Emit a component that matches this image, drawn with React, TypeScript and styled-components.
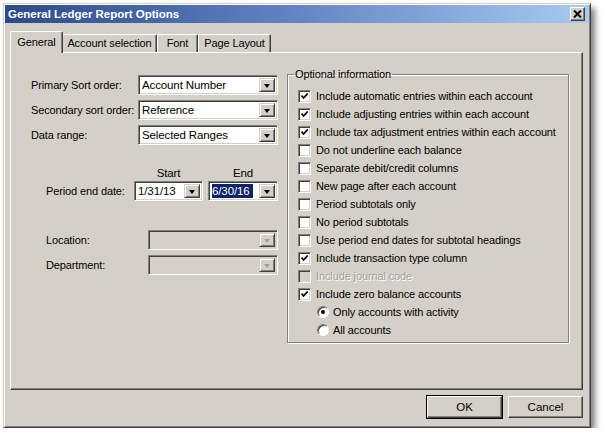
import React from "react";
import styled, { createGlobalStyle, css } from "styled-components";

const GlobalStyle = createGlobalStyle`
  html, body {
    margin: 0;
    padding: 0;
    background: #ffffff;
  }
  body {
    font-family: "Liberation Sans", Arial, sans-serif;
    font-size: 11px;
    letter-spacing: -0.12px;
    color: #000;
  }
`;

const face = "#d4d0c8";

const Window = styled.div`
  box-sizing: border-box;
  margin: 3px 0 0 3px;
  width: 588px;
  height: 425px;
  padding: 1px;
  background: ${face};
  border-top: 1px solid ${face};
  border-left: 1px solid ${face};
  border-right: 1px solid #404040;
  border-bottom: 1px solid #404040;
  box-shadow: inset 1px 1px #ffffff, inset -1px -1px #808080, 4px 5px 6px rgba(0, 0, 0, 0.5);
  display: flex;
  flex-direction: column;
`;

const TitleBar = styled.div`
  height: 18px;
  display: flex;
  align-items: center;
  justify-content: space-between;
  padding: 0 4px 0 3px;
  background: linear-gradient(to right, #2c4a8a 0%, #5b7fbf 45%, #a8cbf1 100%);
`;

const Title = styled.span`
  color: #fff;
  font-weight: bold;
  font-size: 11.5px;
  letter-spacing: 0;
`;

const CloseButton = styled.div`
  box-sizing: border-box;
  width: 15px;
  height: 14px;
  background: ${face};
  border-top: 1px solid #fff;
  border-left: 1px solid #fff;
  border-right: 1px solid #404040;
  border-bottom: 1px solid #404040;
  box-shadow: inset -1px -1px #808080;
  display: flex;
  align-items: center;
  justify-content: center;
`;

const Body = styled.div`
  flex: 1;
  padding: 8px 6px 0 5px;
  display: flex;
  flex-direction: column;
`;

const TabStrip = styled.div`
  display: flex;
  align-items: flex-end;
  height: 21px;
  padding-left: 1px;
  position: relative;
  z-index: 1;
`;

const Tab = styled.div<{ $active?: boolean; $width: number }>`
  box-sizing: border-box;
  width: ${(p) => p.$width}px;
  height: ${(p) => (p.$active ? "22px" : "18px")};
  padding-top: ${(p) => (p.$active ? "4px" : "2px")};
  margin: ${(p) => (p.$active ? "0 -1px -1px -1px" : "0")};
  text-align: center;
  background: ${face};
  border-top: 1px solid #fff;
  border-left: 1px solid #fff;
  border-right: 1px solid #404040;
  box-shadow: inset -1px 0 #808080;
  border-radius: 2px 2px 0 0;
  white-space: nowrap;
  ${(p) =>
    p.$active &&
    css`
      position: relative;
      z-index: 2;
    `}
`;

const Panel = styled.div`
  box-sizing: border-box;
  height: 338px;
  border-top: 1px solid #fff;
  border-left: 1px solid #fff;
  border-right: 1px solid #404040;
  border-bottom: 1px solid #404040;
  box-shadow: inset -1px -1px #808080;
  padding: 22px 0 0 20px;
  display: flex;
  gap: 8px;
`;

const LeftColumn = styled.div`
  display: flex;
  flex-direction: column;
  width: 248px;
`;

const FieldRow = styled.div<{ $indent?: number; $labelWidth: number }>`
  display: flex;
  align-items: center;
  height: 20px;
  margin-bottom: 5px;
  padding-left: ${(p) => p.$indent ?? 0}px;
  & > label {
    width: ${(p) => p.$labelWidth}px;
    flex: none;
  }
`;

const Label = styled.label`
  white-space: nowrap;
`;

const ComboBox = styled.div<{ $width: number; $disabled?: boolean }>`
  box-sizing: border-box;
  width: ${(p) => p.$width}px;
  height: 20px;
  display: flex;
  align-items: stretch;
  background: ${(p) => (p.$disabled ? face : "#fff")};
  border-top: 1px solid #808080;
  border-left: 1px solid #808080;
  border-right: 1px solid #fff;
  border-bottom: 1px solid #fff;
  box-shadow: inset 1px 1px #404040, inset -1px -1px ${face};
  padding: 2px;
`;

const ComboText = styled.div<{ $selected?: boolean }>`
  flex: 1;
  font-size: 11.5px;
  line-height: 14px;
  padding-left: 1px;
  white-space: nowrap;
  overflow: hidden;
  ${(p) =>
    p.$selected &&
    css`
      span {
        display: inline-block;
        padding-right: 3px;
        background: #0a246a;
        color: #fff;
      }
    `}
`;

const DropButton = styled.div<{ $disabled?: boolean }>`
  box-sizing: border-box;
  width: 16px;
  flex: none;
  background: ${face};
  border-top: 1px solid ${face};
  border-left: 1px solid ${face};
  border-right: 1px solid #404040;
  border-bottom: 1px solid #404040;
  box-shadow: inset 1px 1px #fff, inset -1px -1px #808080;
  display: flex;
  align-items: center;
  justify-content: center;
  &::after {
    content: "";
    border-left: 3.5px solid transparent;
    border-right: 3.5px solid transparent;
    border-top: 4px solid ${(p) => (p.$disabled ? "#a0a0a0" : "#000")};
    margin-top: 1px;
  }
`;

const DateBlock = styled.div`
  display: grid;
  grid-template-columns: 83px 69px 70px;
  column-gap: 5px;
  row-gap: 1px;
  margin: 16px 0 0 15px;
`;

const ColumnHead = styled.div`
  font-size: 11.5px;
  text-align: center;
  height: 14px;
  line-height: 14px;
`;

const DateLabel = styled(Label)`
  align-self: center;
`;

const Spacer = styled.div<{ $h: number }>`
  height: ${(p) => p.$h}px;
`;

const GroupBox = styled.fieldset`
  box-sizing: border-box;
  min-width: 0;
  margin: -7px 0 0 0;
  width: 282px;
  height: 275px;
  padding: 7px 0 0 10px;
  border: 1px solid #808080;
  box-shadow: inset 1px 1px #fff, 1px 1px #fff;
  display: flex;
  flex-direction: column;
`;

const Legend = styled.legend`
  padding: 0 1px;
  margin-left: -4px;
`;

const OptionRow = styled.div<{ $indent?: number; $disabled?: boolean }>`
  display: flex;
  align-items: center;
  height: 18px;
  padding-left: ${(p) => p.$indent ?? 0}px;
  white-space: nowrap;
  color: ${(p) => (p.$disabled ? "#a0a0a0" : "#000")};
  text-shadow: ${(p) => (p.$disabled ? "1px 1px #fff" : "none")};
`;

const CheckBox = styled.span<{ $disabled?: boolean }>`
  box-sizing: border-box;
  width: 13px;
  height: 13px;
  flex: none;
  margin-right: 5px;
  background: ${(p) => (p.$disabled ? face : "#fff")};
  border-top: 1px solid #808080;
  border-left: 1px solid #808080;
  border-right: 1px solid #fff;
  border-bottom: 1px solid #fff;
  box-shadow: inset 1px 1px #404040, inset -1px -1px ${face};
  display: flex;
  align-items: center;
  justify-content: center;
`;

const Radio = styled.span<{ $on?: boolean }>`
  box-sizing: border-box;
  width: 12px;
  height: 12px;
  flex: none;
  margin-right: 4px;
  border-radius: 50%;
  background: #fff;
  border: 1px solid;
  border-color: #808080 #fff #fff #808080;
  box-shadow: inset 1px 1px #404040;
  display: flex;
  align-items: center;
  justify-content: center;
  &::after {
    content: "";
    width: 4px;
    height: 4px;
    border-radius: 50%;
    background: ${(p) => (p.$on ? "#000" : "transparent")};
  }
`;

const Footer = styled.div`
  display: flex;
  justify-content: flex-end;
  gap: 6px;
  padding-top: 6px;
`;

const Button = styled.button<{ $default?: boolean }>`
  box-sizing: border-box;
  width: 75px;
  height: 22px;
  font-family: inherit;
  font-size: 11.5px;
  color: #000;
  background: ${face};
  padding: 0;
  border-top: 1px solid #fff;
  border-left: 1px solid #fff;
  border-right: 1px solid #404040;
  border-bottom: 1px solid #404040;
  box-shadow: inset -1px -1px #808080;
  ${(p) =>
    p.$default &&
    css`
      outline: 1px solid #000;
      outline-offset: 0;
    `}
`;

const Check = () => (
  <svg width="7" height="7" viewBox="0 0 7 7">
    <path d="M0.5 2.5 L2.5 5 L6.8 0.5" stroke="#000" strokeWidth="1.8" fill="none" />
  </svg>
);

type Option = { label: string; checked?: boolean; disabled?: boolean };

const options: Option[] = [
  { label: "Include automatic entries within each account", checked: true },
  { label: "Include adjusting entries within each account", checked: true },
  { label: "Include tax adjustment entries within each account", checked: true },
  { label: "Do not underline each balance" },
  { label: "Separate debit/credit columns" },
  { label: "New page after each account" },
  { label: "Period subtotals only" },
  { label: "No period subtotals" },
  { label: "Use period end dates for subtotal headings" },
  { label: "Include transaction type column", checked: true },
  { label: "Include journal code", disabled: true },
  { label: "Include zero balance accounts", checked: true },
];

const Combo = ({
  width,
  value,
  disabled,
  selected,
}: {
  width: number;
  value?: string;
  disabled?: boolean;
  selected?: boolean;
}) => (
  <ComboBox $width={width} $disabled={disabled}>
    <ComboText $selected={selected}>{value && <span>{value}</span>}</ComboText>
    <DropButton $disabled={disabled} />
  </ComboBox>
);

export default function App() {
  return (
    <>
      <GlobalStyle />
      <Window>
        <TitleBar>
          <Title>General Ledger Report Options</Title>
          <CloseButton>
            <svg width="9" height="8" viewBox="0 0 9 8">
              <path d="M1 0.5 L8 7.5 M8 0.5 L1 7.5" stroke="#000" strokeWidth="2" />
            </svg>
          </CloseButton>
        </TitleBar>
        <Body>
          <TabStrip>
            <Tab $active $width={53}>General</Tab>
            <Tab $width={95}>Account selection</Tab>
            <Tab $width={41}>Font</Tab>
            <Tab $width={73}>Page Layout</Tab>
          </TabStrip>
          <Panel>
            <LeftColumn>
              <FieldRow $labelWidth={107}>
                <Label>Primary Sort order:</Label>
                <Combo width={140} value="Account Number" />
              </FieldRow>
              <FieldRow $labelWidth={107}>
                <Label>Secondary sort order:</Label>
                <Combo width={140} value="Reference" />
              </FieldRow>
              <FieldRow $labelWidth={107}>
                <Label>Data range:</Label>
                <Combo width={140} value="Selected Ranges" />
              </FieldRow>
              <DateBlock>
                <span />
                <ColumnHead>Start</ColumnHead>
                <ColumnHead>End</ColumnHead>
                <DateLabel>Period end date:</DateLabel>
                <Combo width={69} value="1/31/13" />
                <Combo width={70} value="6/30/16" selected />
              </DateBlock>
              <Spacer $h={29} />
              <FieldRow $indent={15} $labelWidth={102}>
                <Label>Location:</Label>
                <Combo width={130} disabled />
              </FieldRow>
              <FieldRow $indent={15} $labelWidth={102}>
                <Label>Department:</Label>
                <Combo width={130} disabled />
              </FieldRow>
            </LeftColumn>
            <GroupBox>
              <Legend>Optional information</Legend>
              {options.map((o) => (
                <OptionRow key={o.label} $disabled={o.disabled}>
                  <CheckBox $disabled={o.disabled}>{o.checked && <Check />}</CheckBox>
                  {o.label}
                </OptionRow>
              ))}
              <OptionRow $indent={19}>
                <Radio $on />
                Only accounts with activity
              </OptionRow>
              <OptionRow $indent={19}>
                <Radio />
                All accounts
              </OptionRow>
            </GroupBox>
          </Panel>
          <Footer>
            <Button $default>OK</Button>
            <Button>Cancel</Button>
          </Footer>
        </Body>
      </Window>
    </>
  );
}
